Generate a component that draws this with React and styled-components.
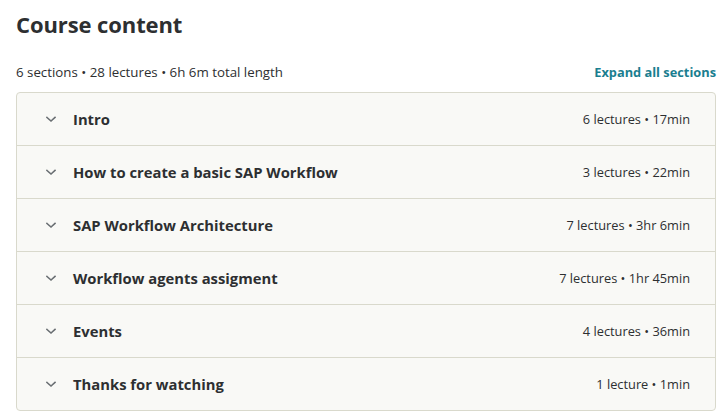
import React from "react";
import styled, { createGlobalStyle } from "styled-components";

const Global = createGlobalStyle`
  html, body { margin: 0; padding: 0; background: #ffffff; }
  body { font-family: "Segoe UI", "Open Sans", "Noto Sans", sans-serif; color: #2d2f31; }
`;

const Page = styled.div`
  padding: 6px 10px 0 16px;
  width: 700px;
`;

const Title = styled.h2`
  margin: 0;
  font-size: 22px;
  font-weight: 700;
  line-height: 36px;
  color: #2d2f31;
  letter-spacing: -0.1px;
`;

const MetaRow = styled.div`
  display: flex;
  justify-content: space-between;
  align-items: center;
  margin-top: 20px;
  height: 20px;
`;

const Meta = styled.span`
  font-size: 13.3px;
  color: #2d2f31;
`;

const ExpandLink = styled.button`
  background: none;
  border: none;
  padding: 0;
  font-family: inherit;
  font-size: 12.8px;
  font-weight: 700;
  color: #1a7e8f;
  cursor: pointer;
`;

const Panel = styled.div`
  margin-top: 10px;
  border: 1px solid #d9d9cc;
  border-radius: 4px;
  overflow: hidden;
  background: #f9f9f6;
`;

const Row = styled.div`
  display: flex;
  align-items: center;
  height: 52px;
  padding: 0 25px 0 28px;
  & + & { border-top: 1px solid #d9d9cc; }
`;

const Chevron = styled.svg`
  width: 12px;
  height: 12px;
  flex: none;
  margin-right: 16px;
  color: #6a6f73;
`;

const SectionTitle = styled.span`
  flex: 1;
  font-size: 14.8px;
  font-weight: 700;
  color: #2d2f31;
`;

const SectionMeta = styled.span`
  font-size: 12.8px;
  color: #2d2f31;
`;

const sections = [
  ["Intro", "6 lectures • 17min"],
  ["How to create a basic SAP Workflow", "3 lectures • 22min"],
  ["SAP Workflow Architecture", "7 lectures • 3hr 6min"],
  ["Workflow agents assigment", "7 lectures • 1hr 45min"],
  ["Events", "4 lectures • 36min"],
  ["Thanks for watching", "1 lecture • 1min"],
];

export default function App() {
  return (
    <>
      <Global />
      <Page>
        <Title>Course content</Title>
        <MetaRow>
          <Meta>6 sections • 28 lectures • 6h 6m total length</Meta>
          <ExpandLink>Expand all sections</ExpandLink>
        </MetaRow>
        <Panel>
          {sections.map(([t, m]) => (
            <Row key={t}>
              <Chevron viewBox="0 0 12 12" fill="none">
                <path d="M2 4.5 L6 8 L10 4.5" stroke="currentColor" strokeWidth="1.6" strokeLinecap="square" />
              </Chevron>
              <SectionTitle>{t}</SectionTitle>
              <SectionMeta>{m}</SectionMeta>
            </Row>
          ))}
        </Panel>
      </Page>
    </>
  );
}
